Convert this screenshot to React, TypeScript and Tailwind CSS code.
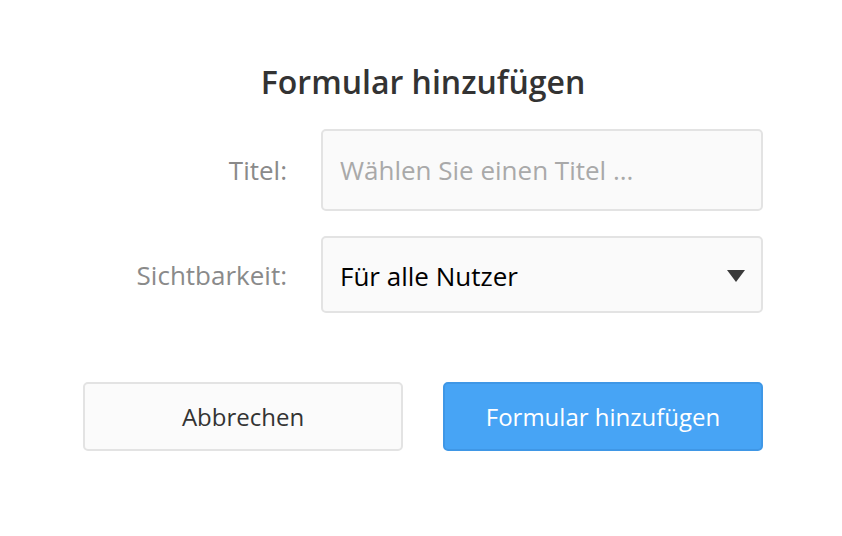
import React from "react";

export default function App() {
  return (
    <div
      className="w-[842px] h-[536px] bg-white flex flex-col items-center pl-[4px]"
      style={{ fontFamily: '"Open Sans", "Noto Sans", sans-serif' }}
    >
      <h1 className="mt-[62px] text-[32px] leading-[40px] font-semibold text-[#333333]">
        Formular hinzufügen
      </h1>
      <div className="mt-[27px] w-[680px] flex flex-col gap-[25px]">
        <div className="flex items-center">
          <label className="w-[204px] text-right text-[26px] text-[#8a8a8a]">Titel:</label>
          <div className="ml-[34px] w-[442px] h-[82px] rounded-[5px] border-2 border-[#e3e3e3] bg-[#fafafa] flex items-center px-[17px]">
            <input
              className="w-full bg-transparent outline-none text-[26px] text-[#333] placeholder:text-[#a9a9a9]"
              placeholder="Wählen Sie einen Titel ..."
            />
          </div>
        </div>
        <div className="flex items-center">
          <label className="w-[204px] text-right text-[26px] text-[#8a8a8a] pt-[2px]">Sichtbarkeit:</label>
          <div className="ml-[34px] w-[442px] h-[77px] rounded-[5px] border-2 border-[#e3e3e3] bg-[#fafafa] flex items-center justify-between pl-[17px] pr-[15px] pt-[3px]">
            <span className="text-[26px] text-black">Für alle Nutzer</span>
            <svg width="20" height="14" viewBox="0 0 20 14">
              <polygon points="1,1 19,1 10,13" fill="#3a3a3a" />
            </svg>
          </div>
        </div>
      </div>
      <div className="mt-[69px] w-[680px] flex gap-[40px]">
        <button className="w-[320px] h-[69px] rounded-[5px] border-2 border-[#e3e3e3] bg-[#fbfbfb] text-[24px] text-[#333]">
          Abbrechen
        </button>
        <button className="w-[320px] h-[69px] rounded-[5px] border-2 border-[#3f97e6] bg-[#47a4f5] text-[24px] text-white">
          Formular hinzufügen
        </button>
      </div>
    </div>
  );
}
